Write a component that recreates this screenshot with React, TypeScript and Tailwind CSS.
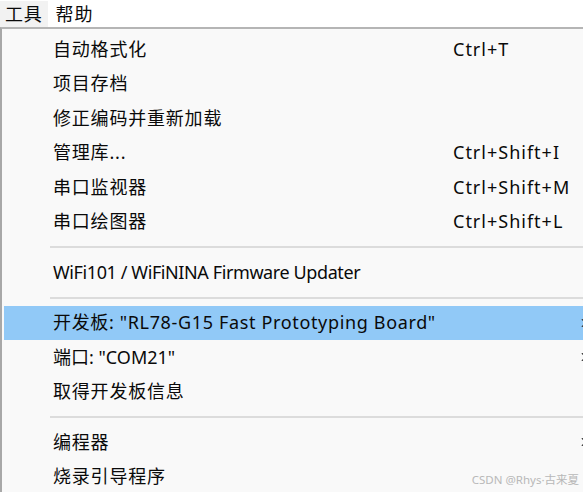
import { ChevronRight } from "lucide-react";

type Row =
  | { kind: "item"; label: string; shortcut?: string; sub?: boolean; active?: boolean; track?: string }
  | { kind: "sep" };

const rows: Row[] = [
  { kind: "item", label: "自动格式化", shortcut: "Ctrl+T" },
  { kind: "item", label: "项目存档" },
  { kind: "item", label: "修正编码并重新加载" },
  { kind: "item", label: "管理库...", shortcut: "Ctrl+Shift+I" },
  { kind: "item", label: "串口监视器", shortcut: "Ctrl+Shift+M" },
  { kind: "item", label: "串口绘图器", shortcut: "Ctrl+Shift+L" },
  { kind: "sep" },
  { kind: "item", label: "WiFi101 / WiFiNINA Firmware Updater", track: "tracking-[-0.4px]" },
  { kind: "sep" },
  { kind: "item", label: '开发板: "RL78-G15 Fast Prototyping Board"', sub: true, active: true, track: "tracking-[0.65px]" },
  { kind: "item", label: '端口: "COM21"', sub: true, track: "tracking-[0px]" },
  { kind: "item", label: "取得开发板信息" },
  { kind: "sep" },
  { kind: "item", label: "编程器", sub: true },
  { kind: "item", label: "烧录引导程序" },
];

export default function App() {
  return (
    <div className="relative w-[583px] h-[492px] overflow-hidden bg-white text-[#0a0a0a] font-['Noto_Sans','Noto_Sans_CJK_SC',sans-serif] text-[18px]">
      {/* Menu bar */}
      <div className="flex h-[27px] items-center pt-[1px] tracking-[0.8px]">
        <div className="h-full px-[5px] flex items-center bg-[#f2f2f2]">工具</div>
        <div className="h-full px-[8px] flex items-center">帮助</div>
      </div>

      {/* Dropdown */}
      <div className="w-[600px] h-[470px] border-t-[2px] border-t-[#b5b5b5] border-l-[2px] border-l-[#a8a8a8] bg-[#f9f9f9] pt-[3px] pl-[2px]">
        {rows.map((row, i) =>
          row.kind === "sep" ? (
            <div key={i} className="h-[16px] flex items-center pl-[46px]">
              <div className="h-[2px] w-full bg-[#dcdcdc]" />
            </div>
          ) : (
            <div
              key={i}
              className={`h-[34.5px] flex items-center ${row.active ? "bg-[#91c9f7]" : ""}`}
            >
              <span className={`w-[449px] pl-[49px] whitespace-nowrap ${row.track ?? "tracking-[0.8px]"}`}>
                {row.label}
              </span>
              <span className="w-[124px] whitespace-nowrap tracking-[1px]">{row.shortcut}</span>
              {row.sub && <ChevronRight size={14} strokeWidth={2} className="text-[#333]" />}
            </div>
          )
        )}
      </div>

      {/* Watermark */}
      <div className="absolute right-[4px] bottom-[4px] text-[11.5px] text-[#b8b8b8]">CSDN @Rhys·古来夏</div>
    </div>
  );
}
